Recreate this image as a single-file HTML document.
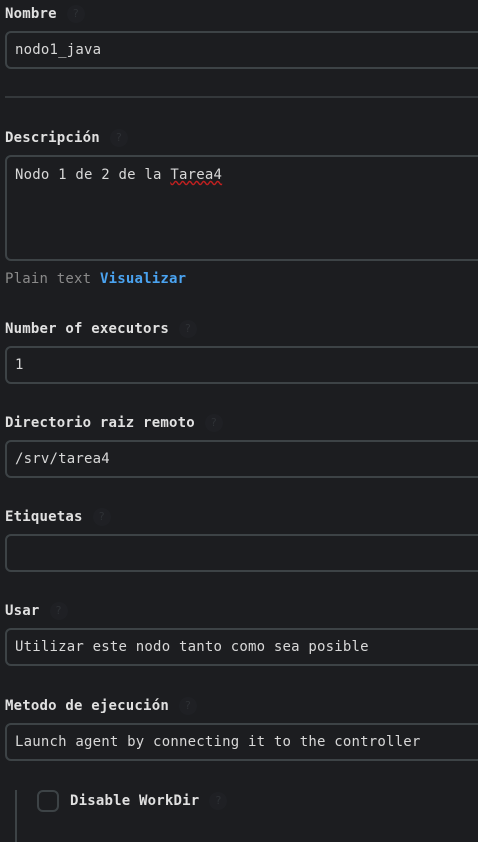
<!DOCTYPE html>
<html><head><style>
body{margin:0;background:#1c1d20;width:478px;height:842px;overflow:hidden;font-family:"DejaVu Sans Mono",monospace;font-size:14px;letter-spacing:0.2px;color:#d6d6d6;position:relative}
.l{position:absolute;left:5px;font-weight:bold;color:#e0e0e0;line-height:18px;font-size:14px;margin-top:1px}
.q{display:inline-block;width:18px;height:18px;border-radius:50%;background:#1f2024;color:#2e3135;font-size:11px;text-align:center;line-height:18px;margin-left:10px;font-weight:normal;vertical-align:top}
.i{position:absolute;left:5px;width:490px;border:2px solid #3d4346;border-radius:6px;box-sizing:border-box;padding-left:8px;color:#d8d8d8;font-size:14px}
</style></head><body>
<div class="l" style="top:4px">Nombre<span class="q">?</span></div>
<div class="i" style="top:31px;height:38px;line-height:35px">nodo1_java</div>
<div style="position:absolute;left:5px;top:96px;width:480px;height:2px;background:#34383b"></div>
<div class="l" style="top:128px">Descripción<span class="q">?</span></div>
<div class="i" style="top:155px;height:106px;padding-top:8px;line-height:20px">Nodo 1 de 2 de la <span style="text-decoration:underline wavy #c02020">Tarea4</span></div>
<div style="position:absolute;left:5px;top:270px;line-height:18px;font-size:14px"><span style="color:#8a8a8a">Plain text</span> <b style="color:#4aa3f0">Visualizar</b></div>
<div class="l" style="top:319px">Number of executors<span class="q">?</span></div>
<div class="i" style="top:346px;height:38px;line-height:35px">1</div>
<div class="l" style="top:413px">Directorio raiz remoto<span class="q">?</span></div>
<div class="i" style="top:440px;height:38px;line-height:35px">/srv/tarea4</div>
<div class="l" style="top:507px">Etiquetas<span class="q">?</span></div>
<div class="i" style="top:534px;height:38px"></div>
<div class="l" style="top:601px">Usar<span class="q">?</span></div>
<div class="i" style="top:628px;height:38px;line-height:35px">Utilizar este nodo tanto como sea posible</div>
<div class="l" style="top:696px">Metodo de ejecución<span class="q">?</span></div>
<div class="i" style="top:723px;height:38px;line-height:35px">Launch agent by connecting it to the controller</div>
<div style="position:absolute;left:15px;top:790px;width:2px;height:52px;background:#3d4346"></div>
<div style="position:absolute;left:37px;top:790px;width:22px;height:22px;border:2px solid #3d4346;border-radius:6px;box-sizing:border-box"></div>
<div class="l" style="left:70px;top:791px">Disable WorkDir<span class="q">?</span></div>
</body></html>
